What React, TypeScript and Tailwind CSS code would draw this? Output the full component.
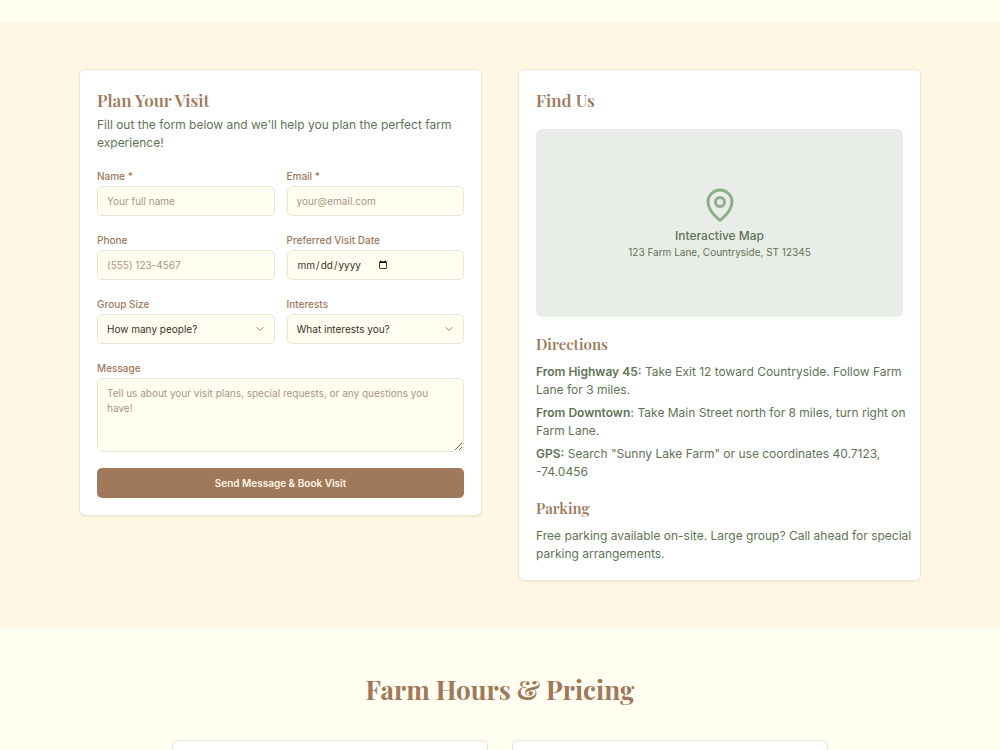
import type { ReactNode } from "react";
import { ChevronDown, MapPin } from "lucide-react";

const fieldStyle =
  "w-full rounded-[5px] border border-[#ebe7d5] bg-[#fffef0] px-[9px] text-[10px] text-[#3d3029] placeholder:text-[#a99584] outline-none focus:border-[#a0785a]";

function Card({ children }: { children: ReactNode }) {
  return (
    <div className="rounded-md border border-[#ebe7d5] bg-white px-[17px] pt-[18px] pb-[17px] shadow-xs">
      {children}
    </div>
  );
}

function CardTitle({ children }: { children: ReactNode }) {
  return (
    <h2 className="font-['Playfair_Display','Liberation_Serif',serif] text-[17px] leading-6 font-semibold text-[#a0785a]">
      {children}
    </h2>
  );
}

function SubHeading({ children }: { children: ReactNode }) {
  return (
    <h3 className="mt-4 mb-2 font-['Playfair_Display','Liberation_Serif',serif] text-[15px] leading-[22px] font-semibold text-[#a0785a]">
      {children}
    </h3>
  );
}

function BodyText({ children }: { children: ReactNode }) {
  return (
    <p className="-mr-3 text-[12px] leading-[18px] text-[#5f7355]">
      {children}
    </p>
  );
}

function Field({
  id,
  label,
  children,
}: {
  id: string;
  label: string;
  children: ReactNode;
}) {
  return (
    <div className="flex min-w-0 flex-col gap-[2px]">
      <label
        htmlFor={id}
        className="text-[10px] leading-4 font-medium text-[#a0785a]"
      >
        {label}
      </label>
      {children}
    </div>
  );
}

function SelectField({
  id,
  placeholder,
  options,
}: {
  id: string;
  placeholder: string;
  options: string[];
}) {
  return (
    <div className="relative">
      <select
        id={id}
        defaultValue=""
        className={`${fieldStyle} h-[30px] appearance-none pr-7`}
      >
        <option value="">{placeholder}</option>
        {options.map((option) => (
          <option key={option}>{option}</option>
        ))}
      </select>
      <ChevronDown className="pointer-events-none absolute top-1/2 right-[9px] size-3 -translate-y-1/2 text-[#8f877c]" />
    </div>
  );
}

function VisitForm() {
  return (
    <Card>
      <CardTitle>Plan Your Visit</CardTitle>
      <div className="mt-1">
        <BodyText>
          Fill out the form below and we'll help you plan the perfect farm
          experience!
        </BodyText>
      </div>
      <form className="mt-4 flex flex-col gap-4">
        <div className="grid grid-cols-2 gap-x-3 gap-y-4">
          <Field id="name" label="Name *">
            <input
              id="name"
              type="text"
              placeholder="Your full name"
              className={`${fieldStyle} h-[30px]`}
            />
          </Field>
          <Field id="email" label="Email *">
            <input
              id="email"
              type="email"
              placeholder="your@email.com"
              className={`${fieldStyle} h-[30px]`}
            />
          </Field>
          <Field id="phone" label="Phone">
            <input
              id="phone"
              type="tel"
              placeholder="(555) 123-4567"
              className={`${fieldStyle} h-[30px]`}
            />
          </Field>
          <Field id="date" label="Preferred Visit Date">
            <input
              id="date"
              type="date"
              className={`${fieldStyle} flex h-[30px]`}
            />
          </Field>
          <Field id="group" label="Group Size">
            <SelectField
              id="group"
              placeholder="How many people?"
              options={["1-2 people", "3-5 people", "6-10 people"]}
            />
          </Field>
          <Field id="interests" label="Interests">
            <SelectField
              id="interests"
              placeholder="What interests you?"
              options={["Farm tour", "Fruit picking", "Animals"]}
            />
          </Field>
        </div>
        <Field id="message" label="Message">
          <textarea
            id="message"
            placeholder="Tell us about your visit plans, special requests, or any questions you have!"
            className={`${fieldStyle} block h-[74px] resize-y py-[7px] leading-[15px]`}
          />
        </Field>
        <button
          type="submit"
          className="h-[30px] w-full rounded-[5px] bg-[#a0785a] text-[10px] font-semibold text-[#fff6e4]"
        >
          Send Message & Book Visit
        </button>
      </form>
    </Card>
  );
}

function FindUs() {
  return (
    <Card>
      <CardTitle>Find Us</CardTitle>
      <div className="mt-[17px] flex h-[188px] flex-col items-center justify-center rounded-md bg-[#e8ede7] text-[#5f7355]">
        <MapPin className="mb-1 size-9 text-[#8fae8b]" />
        <p className="text-[12px] leading-[18px] font-medium">
          Interactive Map
        </p>
        <p className="text-[10px] leading-[14px]">
          123 Farm Lane, Countryside, ST 12345
        </p>
      </div>
      <SubHeading>Directions</SubHeading>
      <div className="flex flex-col gap-[5px]">
        <BodyText>
          <strong className="font-semibold">From Highway 45:</strong> Take Exit
          12 toward Countryside. Follow Farm Lane for 3 miles.
        </BodyText>
        <BodyText>
          <strong className="font-semibold">From Downtown:</strong> Take Main
          Street north for 8 miles, turn right on Farm Lane.
        </BodyText>
        <BodyText>
          <strong className="font-semibold">GPS:</strong> Search "Sunny Lake
          Farm" or use coordinates 40.7123, -74.0456
        </BodyText>
      </div>
      <SubHeading>Parking</SubHeading>
      <BodyText>
        Free parking available on-site. Large group? Call ahead for special
        parking arrangements.
      </BodyText>
    </Card>
  );
}

export default function App() {
  return (
    <div className="h-screen overflow-hidden bg-[#fffef0] pt-[22px] font-[Inter,sans-serif]">
      <section className="bg-[#fff6e4] px-[18px] py-[47px]">
        <div className="mx-auto grid max-w-[842px] grid-cols-2 items-start gap-9">
          <VisitForm />
          <FindUs />
        </div>
      </section>
      <section className="px-[18px] py-[47px]">
        <h2 className="mb-[35px] text-center font-['Playfair_Display','Liberation_Serif',serif] text-[26px] leading-[30px] font-bold text-[#a0785a]">
          Farm Hours & Pricing
        </h2>
        <div className="mx-auto grid max-w-[656px] grid-cols-2 gap-6">
          <div className="h-60 rounded-md border border-[#ebe7d5] bg-white shadow-xs" />
          <div className="h-60 rounded-md border border-[#ebe7d5] bg-white shadow-xs" />
        </div>
      </section>
    </div>
  );
}
